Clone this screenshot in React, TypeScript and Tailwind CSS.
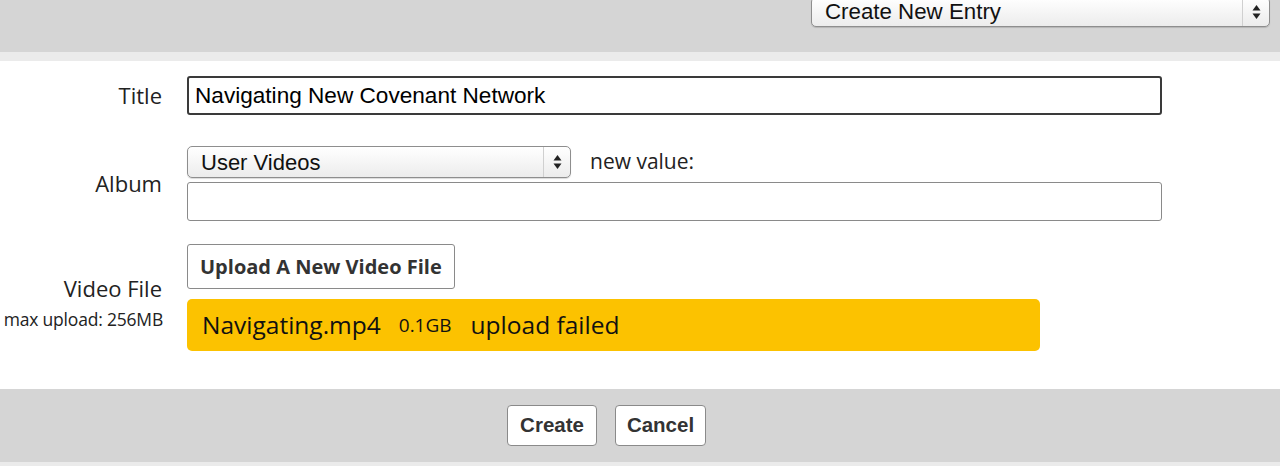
import React, { useState } from "react";

const helv = "font-['Liberation_Sans',Arial,sans-serif]";
const open = "font-['Open_Sans',sans-serif]";

function Arrows() {
  return (
    <svg width="9" height="16" viewBox="0 0 9 16" className="text-[#222]">
      <path d="M4.5 1 L8.5 6.5 H0.5 Z" fill="currentColor" />
      <path d="M4.5 15 L8.5 9.5 H0.5 Z" fill="currentColor" />
    </svg>
  );
}

function MacSelect({ value, className }: { value: string; className: string }) {
  return (
    <div
      className={`flex items-stretch rounded-[5px] border border-[#8e8e8e] bg-gradient-to-b from-white to-[#ececec] shadow-[0_1px_1px_rgba(0,0,0,0.15)] ${className}`}
    >
      <div className={`flex-1 flex items-center pl-[13px] text-[#111] ${helv}`}>{value}</div>
      <div className="w-[27px] flex items-center justify-center border-l border-[#d0d0d0]">
        <Arrows />
      </div>
    </div>
  );
}

export default function App() {
  const [title, setTitle] = useState("Navigating New Covenant Network");
  const [newValue, setNewValue] = useState("");

  return (
    <div className="w-[1280px] h-[466px] bg-white overflow-hidden">
      {/* Top bar */}
      <header className="h-[52px] bg-[#d5d5d5] flex justify-end pr-[10px]">
        <MacSelect value="Create New Entry" className="w-[459px] h-[30px] -mt-[3px] text-[22.3px]" />
      </header>
      <div className="h-[9px] bg-[#ebebeb]" />

      {/* Form */}
      <main className="pt-[15px] pb-[38px] flex flex-col">
        {/* Title */}
        <div className="flex items-center">
          <label className={`w-[162px] text-right text-[22px] text-[#222] ${open}`}>Title</label>
          <input
            value={title}
            onChange={(e) => setTitle(e.target.value)}
            className={`ml-[25px] w-[975px] h-[39px] px-[6px] rounded-[3px] border-2 border-[#3a3a3a] outline-none text-[22.6px] text-black ${helv}`}
          />
        </div>

        {/* Album */}
        <div className="flex items-center mt-[31px]">
          <label className={`w-[162px] text-right text-[22px] text-[#222] ${open}`}>Album</label>
          <div className="ml-[25px] flex flex-col gap-[4px]">
            <div className="flex items-center">
              <MacSelect value="User Videos" className="w-[384px] h-[32px] text-[22px]" />
              <span className={`ml-[19px] text-[21px] text-[#222] ${open}`}>new value:</span>
            </div>
            <input
              value={newValue}
              onChange={(e) => setNewValue(e.target.value)}
              className={`w-[975px] h-[39px] px-[7px] rounded-[3px] border border-[#8a8a8a] outline-none text-[22px] ${helv}`}
            />
          </div>
        </div>

        {/* Video File */}
        <div className="flex items-start mt-[23px]">
          <div className={`w-[162px] text-right text-[#222] pt-[29px] ${open}`}>
            <div className="text-[22px] leading-[30px]">Video File</div>
            <div className="text-[17.5px] leading-[22px] mt-[5px] -mr-[1px] tracking-[-0.2px] whitespace-nowrap">max upload: 256MB</div>
          </div>
          <div className="ml-[25px] flex flex-col items-start gap-[10px]">
            <button
              className={`h-[45px] px-[12px] rounded-[3px] border border-[#8a8a8a] bg-white text-[20px] font-bold text-[#333] ${open}`}
            >
              Upload A New Video File
            </button>
            <div
              className={`w-[853px] h-[52px] rounded-[5px] bg-[#fcc200] flex items-center pl-[15px] text-[#111] ${open}`}
            >
              <span className="text-[24.5px]">Navigating.mp4</span>
              <span className="text-[19px] ml-[18px]">0.1GB</span>
              <span className="text-[24.5px] ml-[19px]">upload failed</span>
            </div>
          </div>
        </div>
      </main>

      {/* Bottom bar */}
      <footer className="h-[73px] bg-[#d5d5d5] flex items-center justify-center gap-[18px] pr-[67px]">
        <button
          className={`w-[90px] h-[41px] rounded-[4px] border border-[#8a8a8a] bg-white text-[20.5px] font-bold text-[#333] ${helv}`}
        >
          Create
        </button>
        <button
          className={`w-[91px] h-[41px] rounded-[4px] border border-[#8a8a8a] bg-white text-[20.5px] font-bold text-[#333] ${helv}`}
        >
          Cancel
        </button>
      </footer>
      <div className="h-[4px] bg-[#ebebeb]" />
    </div>
  );
}
